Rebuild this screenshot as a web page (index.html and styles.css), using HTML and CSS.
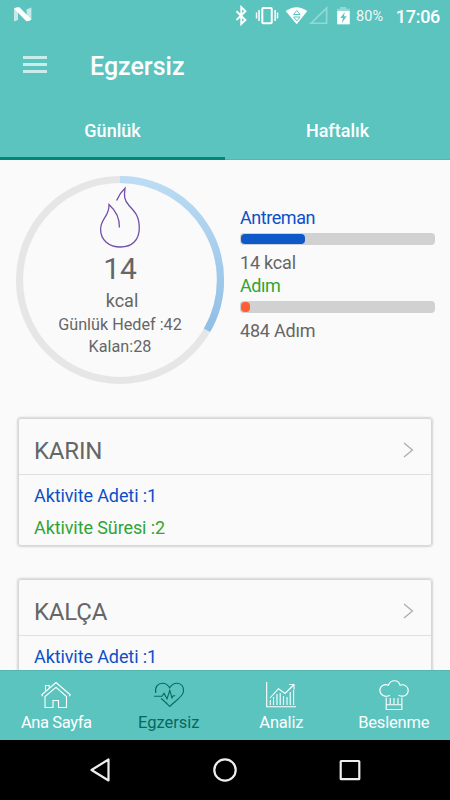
FILE: index.html
```html
<!DOCTYPE html>
<html lang="tr">

<head>
    <meta charset="UTF-8">
    <meta name="viewport" content="width=device-width, initial-scale=1.0">
    <title>Egzersiz</title>
    <link rel="stylesheet" href="styles.css">
</head>

<body>
    <div class="screen">
        <!-- Status bar -->
        <div class="status-bar">
            <svg class="app-icon" width="18" height="16" viewBox="0 0 18 16">
                <path d="M0 1.500 4 1v12L0 14.500zM12.500 2.500l5-2V12l-4 2z" fill="#fff" opacity=".65" />
                <path d="M0 1.400Q2.500 0 5.500 .3L17.600 12.500Q15.500 14.600 12.400 14.300z" fill="#fff" />
            </svg>
            <svg class="status-icons" width="126" height="22" viewBox="0 0 126 22">
                <!-- bluetooth -->
                <path d="M2.500 6.200 11.500 15 7.300 19V2L11.500 6.200 2.500 15" fill="none" stroke="#fff" stroke-width="1.900" />
                <!-- vibrate -->
                <rect x="28.500" y="2.900" width="9.500" height="15.400" rx="1" fill="none" stroke="#fff" stroke-width="2" />
                <path d="M25.200 5v11M41.400 5v11M22.700 7.500v6M43.800 7.500v6" stroke="#fff" stroke-width="1.500" />
                <!-- wifi -->
                <path d="M52 6Q62.800-1.800 73.800 6L63 19.200z" fill="#fff" />
                <path d="M60 9.500 63.200 5.500 66.500 9.500zM60 12 63.200 16 66.500 12z" fill="none" stroke="#5bc4bf" stroke-width="1" />
                <!-- signal -->
                <path d="M77.500 18.300 93.200 3v15.300z" fill="none" stroke="#fff" stroke-width="1.700" opacity=".35" />
                <!-- battery -->
                <path d="M103.800 6.500V3.700h3V1.900h6v1.800h3.700v2.800z" fill="#fff" opacity=".35" />
                <path d="M103.800 6h12.700v13.400h-12.700z" fill="#fff" />
                <path d="M111.500 7 107 13h2.600l-1.100 5 4.900-6.700h-2.800z" fill="#5bc4bf" />
            </svg>
            <span class="battery-level">80%</span>
            <span class="clock">17:06</span>
        </div>

        <!-- Toolbar -->
        <header class="toolbar">
            <div class="menu-icon"><span></span><span></span><span></span></div>
            <h1>Egzersiz</h1>
        </header>
        <div class="tabs">
            <div class="tab active">Günlük</div>
            <div class="tab">Haftalık</div>
        </div>

        <main class="content">
            <section class="summary">
                <div class="ring">
                    <svg class="ring-circle" width="210" height="210" viewBox="0 0 210 210">
                        <defs>
                            <linearGradient id="blue" x1="0" y1="0" x2="0" y2="1">
                                <stop offset="0" stop-color="#bbdcf4" />
                                <stop offset="1" stop-color="#90bfe5" />
                            </linearGradient>
                        </defs>
                        <circle cx="105" cy="105" r="100.500" fill="none" stroke="#e6e6e6" stroke-width="7.200" />
                        <path d="M105 4.500A100.500 100.500 0 0 1 192.040 155.250" fill="none" stroke="url(#blue)" stroke-width="7.200" />
                    </svg>
                    <svg class="flame" width="42" height="62" viewBox="0 0 42 62">
                        <path d="M17.600 14.500C19.500 9.800 22 6 26 2.300 25 9.500 25 14 30 19.500 36 26 40.300 30 40.300 42 40.300 54 33 61 21.500 61 10 61 1.600 54 1.600 43.500 1.600 32 10.500 31 10 18.500 16 24 20.800 32 20.400 41.500" fill="none" stroke="#714fa8" stroke-width="1.300" />
                    </svg>
                    <div class="ring-value">14</div>
                    <div class="ring-unit">kcal</div>
                    <div class="ring-note">Günlük Hedef :42</div>
                    <div class="ring-note">Kalan:28</div>
                </div>
                <div class="stats">
                    <div class="stat">
                        <div class="stat-title blue">Antreman</div>
                        <div class="bar"><div class="bar-fill" style="width: 33%"></div></div>
                        <div class="stat-value">14 kcal</div>
                    </div>
                    <div class="stat">
                        <div class="stat-title green">Adım</div>
                        <div class="bar"><div class="bar-fill orange" style="width: 4.840%"></div></div>
                        <div class="stat-value">484 Adım</div>
                    </div>
                </div>
            </section>

            <section class="cards">
                <div class="card">
                    <div class="card-header">
                        <h2>KARIN</h2>
                        <svg width="11" height="16" viewBox="0 0 11 16">
                            <path d="M1 1 9.500 8 1 15" fill="none" stroke="#aaa" stroke-width="1.200" />
                        </svg>
                    </div>
                    <p class="blue">Aktivite Adeti :1</p>
                    <p class="green">Aktivite Süresi :2</p>
                </div>
                <div class="card">
                    <div class="card-header">
                        <h2>KALÇA</h2>
                        <svg width="11" height="16" viewBox="0 0 11 16">
                            <path d="M1 1 9.500 8 1 15" fill="none" stroke="#aaa" stroke-width="1.200" />
                        </svg>
                    </div>
                    <p class="blue">Aktivite Adeti :1</p>
                </div>
            </section>
        </main>

        <!-- Bottom menu -->
        <nav class="bottom-nav">
            <div class="nav-item">
                <svg width="32" height="32" viewBox="0 0 32 32">
                    <path d="M1.500 16 16 3.500 30.500 16M1.500 16l1.500 1M30.500 16l-1.500 1M5.500 12.300V6.500h3.700v2.700M5 17.500V28.500h8v-7h5.500v7h8V17.500L16 8.300z" />
                </svg>
                <span>Ana Sayfa</span>
            </div>
            <div class="nav-item active">
                <svg width="32" height="32" viewBox="0 0 32 32">
                    <path d="M2.800 14C1.500 8 5 4.200 9.500 4.200c3.500 0 5.600 2 7.200 4.600C18.300 6 21 4.200 24 4.200c4.500 0 7.300 4 6.500 8.300C29.700 18 22 22 16.700 27.500 13.500 24 10.500 21.500 8 19.300M1 17.300h8l2-3 3 5.500 2.800-8.500 2.200 7.500 1.200-2h2" />
                </svg>
                <span>Egzersiz</span>
            </div>
            <div class="nav-item">
                <svg width="32" height="32" viewBox="0 0 32 32">
                    <path d="M1.700 3v24.700H31M5 19l8.500-9.300 6.500 4.800L28.500 6M24 5.500h5v5M5.300 26v-5M8.500 26v-8M12 26V15M15.200 26V14M18.500 26v-9M22 26v-8M25.200 26V13M28.600 26V11" />
                </svg>
                <span>Analiz</span>
            </div>
            <div class="nav-item">
                <svg width="32" height="32" viewBox="0 0 32 32">
                    <path d="M12 16.500C7 18.500 2 16 1.900 11.500 1.800 7 6.500 4.500 10.500 6.200 12.500.2 20.500.2 22 6.200c4.500-1.500 8.200 1.500 8.200 5.300 0 4.500-4.500 7-9.700 4.700M8.200 18.500V30.500h15.700V18.500M8.200 25.800h15.700M12.200 25v-6M16 25v-6M20 25v-6" />
                </svg>
                <span>Beslenme</span>
            </div>
        </nav>

        <!-- System buttons -->
        <div class="system-nav">
            <svg width="24" height="26" viewBox="0 0 24 26"><path d="M20.500 2.500v21L3.500 13z" /></svg>
            <svg width="26" height="26" viewBox="0 0 26 26"><circle cx="13" cy="13" r="10.700" /></svg>
            <svg width="24" height="26" viewBox="0 0 24 26"><rect x="2.700" y="4" width="18.600" height="18.200" rx=".5" /></svg>
        </div>
    </div>
</body>

</html>
```
FILE: styles.css
```css
* {
    box-sizing: border-box;
}

body {
    margin: 0;
    font-family: Roboto, sans-serif;
    background-color: #fafafa;
    color: #666;
}

h1,
h2,
p {
    margin: 0;
    font-weight: 400;
}

.screen {
    width: 450px;
    height: 800px;
    display: flex;
    flex-direction: column;
    overflow: hidden;
}

/* Status bar */
.status-bar {
    height: 32px;
    flex-shrink: 0;
    display: flex;
    align-items: center;
    padding: 0 10px 0 14px;
    background-color: #5bc4bf;
    color: #fff;
}

.status-icons {
    margin: -1px 0 0 202px;
}

.app-icon {
    margin-top: -2px;
}

.battery-level {
    width: 40px;
    margin-left: -3px;
    font-size: 14.5px;
    opacity: 0.9;
}

.clock {
    margin-left: auto;
    font-size: 18px;
    font-weight: 500;
    letter-spacing: -0.3px;
}

/* Toolbar */
.toolbar {
    height: 70px;
    flex-shrink: 0;
    display: flex;
    align-items: center;
    padding-left: 23px;
    background-color: #5bc4bf;
    color: #fff;
}

.menu-icon {
    width: 24px;
    display: flex;
    flex-direction: column;
    gap: 4px;
    margin: -5px 43px 0 0;
}

.menu-icon span {
    height: 3px;
    background-color: #fff;
    opacity: 0.68;
}

.toolbar h1 {
    font-size: 25px;
    font-weight: 500;
    line-height: 70px;
}

.tabs {
    height: 58px;
    flex-shrink: 0;
    display: flex;
    background-color: #5bc4bf;
    color: #fff;
}

.tab {
    flex: 1;
    text-align: center;
    font-size: 18px;
    font-weight: 500;
    line-height: 57px;
}

.tab.active {
    border-bottom: 3px solid #00897b;
}

.tab:last-child {
    border-bottom: 1px solid #54b6b1;
}

/* Daily summary */
.content {
    flex: 1;
    min-height: 0;
    overflow: hidden;
}

.summary {
    height: 258px;
    display: flex;
    padding: 15px 15px 0;
}

.ring {
    position: relative;
    width: 210px;
    height: 210px;
    display: flex;
    flex-direction: column;
    align-items: center;
    padding-top: 11px;
}

.ring-circle {
    position: absolute;
    top: 0;
    left: 0;
}

.ring-value {
    font-size: 30px;
    line-height: 36px;
    margin-top: 3px;
}

.ring-unit {
    padding-left: 4px;
    font-size: 18px;
    line-height: 28px;
}

.ring-note {
    font-size: 16.2px;
    line-height: 22px;
}

.ring-unit + .ring-note {
    margin-top: -1px;
}

.stats {
    width: 195px;
    margin-left: 15px;
    padding-top: 31px;
}

.stat {
    height: 68px;
    font-size: 18px;
    letter-spacing: -0.2px;
}

.stat-title {
    line-height: 24px;
    letter-spacing: -0.45px;
}

.bar {
    height: 12px;
    margin-top: 3px;
    padding: 1px;
    border-radius: 4px;
    background-color: #d1d1d1;
}

.bar-fill {
    height: 10px;
    border-radius: 4px;
    background-color: #0f58c9;
}

.bar-fill.orange {
    background-color: #ff5e36;
}

.stat-value {
    margin-top: 5px;
    line-height: 25px;
}

.blue {
    color: #0d4fc8;
}

.green {
    color: #2ea534;
}

/* Activity cards */
.cards {
    display: flex;
    flex-direction: column;
    gap: 32.5px;
    padding: 0 18px;
}

.card {
    height: 128px;
    flex-shrink: 0;
    border: 1px solid #d8d8d8;
    border-radius: 3px;
    box-shadow: 0 0 2px 1px rgba(0, 0, 0, 0.15);
}

.card-header {
    height: 56px;
    display: flex;
    align-items: center;
    justify-content: space-between;
    padding: 7px 17px 0 15px;
    border-bottom: 1px solid #e0e0e0;
}

.card h2 {
    font-size: 24px;
    line-height: 48px;
    letter-spacing: -0.2px;
    padding-top: 2px;
}

.card p {
    padding-left: 15px;
    font-size: 18px;
    line-height: 32px;
    letter-spacing: -0.1px;
}

.card-header + p {
    margin-top: 5px;
}

/* Bottom menu */
.bottom-nav {
    height: 70px;
    flex-shrink: 0;
    display: flex;
    background-color: #5bc4bf;
    border-top: 1px solid #54b6b1;
    color: #fff;
}

.nav-item {
    flex: 1;
    display: flex;
    flex-direction: column;
    align-items: center;
    padding-top: 8px;
    font-size: 16.5px;
    line-height: 23px;
    letter-spacing: -0.2px;
}

.nav-item:first-child {
    letter-spacing: -0.4px;
}

.nav-item.active {
    color: #08685f;
    letter-spacing: 0;
}

.nav-item svg {
    fill: none;
    stroke: currentColor;
    stroke-width: 1.1;
}

/* System buttons */
.system-nav {
    height: 60px;
    flex-shrink: 0;
    display: flex;
    align-items: center;
    justify-content: space-between;
    padding: 0 88px;
    background-color: #000;
}

.system-nav svg {
    fill: none;
    stroke: #eee;
    stroke-width: 2.2;
    stroke-linejoin: round;
}
```
